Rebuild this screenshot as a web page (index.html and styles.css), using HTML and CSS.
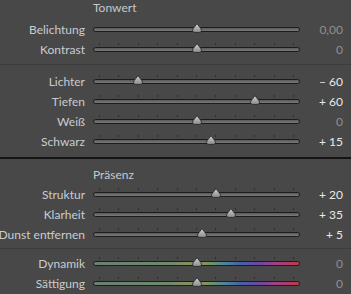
FILE: index.html
```html
<!DOCTYPE html>
<html lang="de">
<head>
<meta charset="utf-8">
<link rel="stylesheet" href="styles.css">
</head>
<body>
<div class="panel">
  <section class="sec sec-1">
    <div class="head">Tonwert</div>
    <div class="row"><span class="lbl">Belichtung</span><div class="slider no-ticks"><div class="track"></div><svg class="thumb" style="left:103.5px" viewBox="0 0 11 10" width="12" height="10"><use href="#th"/></svg></div><span class="val dim">0,00</span></div>
    <div class="row"><span class="lbl">Kontrast</span><div class="slider"><div class="ticks"><i></i><i></i><i></i><i></i><i></i><i></i><i></i><i></i><i></i><i></i><i></i></div><div class="track"></div><svg class="thumb" style="left:103.5px" viewBox="0 0 11 10" width="12" height="10"><use href="#th"/></svg></div><span class="val dim">0</span></div>
  </section>
  <hr class="div-light">
  <section class="sec sec-2">
    <div class="row"><span class="lbl">Lichter</span><div class="slider"><div class="ticks"><i></i><i></i><i></i><i></i><i></i><i></i><i></i><i></i><i></i><i></i><i></i></div><div class="track"></div><svg class="thumb" style="left:45px" viewBox="0 0 11 10" width="12" height="10"><use href="#th"/></svg></div><span class="val">– 60</span></div>
    <div class="row"><span class="lbl">Tiefen</span><div class="slider"><div class="ticks"><i></i><i></i><i></i><i></i><i></i><i></i><i></i><i></i><i></i><i></i><i></i></div><div class="track"></div><svg class="thumb" style="left:162px" viewBox="0 0 11 10" width="12" height="10"><use href="#th"/></svg></div><span class="val">+ 60</span></div>
    <div class="row"><span class="lbl">Weiß</span><div class="slider"><div class="ticks"><i></i><i></i><i></i><i></i><i></i><i></i><i></i><i></i><i></i><i></i><i></i></div><div class="track"></div><svg class="thumb" style="left:103.5px" viewBox="0 0 11 10" width="12" height="10"><use href="#th"/></svg></div><span class="val dim">0</span></div>
    <div class="row"><span class="lbl">Schwarz</span><div class="slider"><div class="ticks"><i></i><i></i><i></i><i></i><i></i><i></i><i></i><i></i><i></i><i></i><i></i></div><div class="track"></div><svg class="thumb" style="left:118px" viewBox="0 0 11 10" width="12" height="10"><use href="#th"/></svg></div><span class="val">+ 15</span></div>
  </section>
  <hr class="div-dark">
  <section class="sec sec-3">
    <div class="head">Präsenz</div>
    <div class="row"><span class="lbl">Struktur</span><div class="slider"><div class="ticks"><i></i><i></i><i></i><i></i><i></i><i></i><i></i><i></i><i></i><i></i><i></i></div><div class="track"></div><svg class="thumb" style="left:123px" viewBox="0 0 11 10" width="12" height="10"><use href="#th"/></svg></div><span class="val">+ 20</span></div>
    <div class="row"><span class="lbl">Klarheit</span><div class="slider"><div class="ticks"><i></i><i></i><i></i><i></i><i></i><i></i><i></i><i></i><i></i><i></i><i></i></div><div class="track"></div><svg class="thumb" style="left:138px" viewBox="0 0 11 10" width="12" height="10"><use href="#th"/></svg></div><span class="val">+ 35</span></div>
    <div class="row"><span class="lbl">Dunst entfernen</span><div class="slider"><div class="ticks"><i></i><i></i><i></i><i></i><i></i><i></i><i></i><i></i><i></i><i></i><i></i></div><div class="track"></div><svg class="thumb" style="left:108.5px" viewBox="0 0 11 10" width="12" height="10"><use href="#th"/></svg></div><span class="val">+ 5</span></div>
  </section>
  <hr class="div-light">
  <section class="sec sec-4">
    <div class="row"><span class="lbl">Dynamik</span><div class="slider"><div class="ticks"><i></i><i></i><i></i><i></i><i></i><i></i><i></i><i></i><i></i><i></i><i></i></div><div class="track color"></div><svg class="thumb" style="left:103.5px" viewBox="0 0 11 10" width="12" height="10"><use href="#th"/></svg></div><span class="val dim">0</span></div>
    <div class="row"><span class="lbl">Sättigung</span><div class="slider"><div class="ticks"><i></i><i></i><i></i><i></i><i></i><i></i><i></i><i></i><i></i><i></i><i></i></div><div class="track color"></div><svg class="thumb" style="left:103.5px" viewBox="0 0 11 10" width="12" height="10"><use href="#th"/></svg></div><span class="val dim">0</span></div>
  </section>
</div>
<svg width="0" height="0" class="defs">
  <defs>
    <linearGradient id="tg" x1="0" y1="0" x2="0" y2="1">
      <stop offset="0" stop-color="#d2d2d2"/>
      <stop offset="1" stop-color="#8a8a8a"/>
    </linearGradient>
    <symbol id="th" viewBox="0 0 11 10">
      <path d="M5.5 0.6 L9.3 5.6 Q10.6 7.4 9.6 8.6 Q9 9.4 7.6 9.4 L3.4 9.4 Q2 9.4 1.4 8.6 Q0.4 7.4 1.7 5.6 Z" fill="url(#tg)" stroke="#2b2b2b" stroke-width="0.9"/>
    </symbol>
  </defs>
</svg>
</body>
</html>
```
FILE: styles.css
```css
html, body {
  margin: 0;
  padding: 0;
  background: #484848;
}
body {
  width: 351px;
  height: 294px;
  overflow: hidden;
  font-family: Lato, "Open Sans", sans-serif;
  font-size: 12px;
  color: #c9ccd0;
}
.defs { position: absolute; }
.panel { display: flex; flex-direction: column; }
.sec { display: flex; flex-direction: column; }
.sec-1 { height: 64px; }
.sec-2 { height: 92px; padding-top: 6px; box-sizing: border-box; }
.sec-3 { height: 89px; padding-top: 7px; box-sizing: border-box; }
.sec-4 { height: 45px; padding-top: 4px; box-sizing: border-box; }
.head {
  height: 19px;
  line-height: 16px;
  padding-left: 93px;
  color: #c5c8cc;
}
.sec-3 .head { height: 18px; line-height: 18px; }
.row {
  height: 20px;
  display: grid;
  grid-template-columns: 85px 207px 1fr;
  align-items: center;
}
.lbl {
  display: flex;
  justify-content: flex-end;
  white-space: nowrap;
  min-width: 0;
}
.slider {
  position: relative;
  height: 20px;
  margin-left: 8px;
  width: 207px;
}
.track {
  position: absolute;
  left: 0;
  right: 0;
  top: 8px;
  height: 3px;
  border: 1px solid #1c1c1c;
  border-radius: 3px;
  background: linear-gradient(#5a5a5a, #7a7a7a);
}
.track.color {
  background: linear-gradient(90deg, #6a7f74 0%, #6c8a6c 35%, #89935a 50%, #7a9262 56%, #4f8896 63%, #4460a8 72%, #6848a6 80%, #9a4288 88%, #c0384a 100%);
}
.ticks {
  position: absolute;
  left: 6px;
  right: 6px;
  top: 4px;
  height: 2px;
  display: flex;
  justify-content: space-between;
}
.ticks i {
  display: block;
  width: 1px;
  height: 2px;
  background: #2e2e2e;
}
.thumb {
  position: absolute;
  top: 4px;
  transform: translateX(-50%);
}
.val {
  text-align: right;
  padding-right: 8px;
  color: #e8e8e8;
  white-space: pre;
}
.val.dim { color: #8f8f8f; }
hr {
  margin: 0;
  border: 0;
}
.div-light { height: 1px; background: #3c3c3c; }
.div-dark { height: 2px; background: #151515; }
```
